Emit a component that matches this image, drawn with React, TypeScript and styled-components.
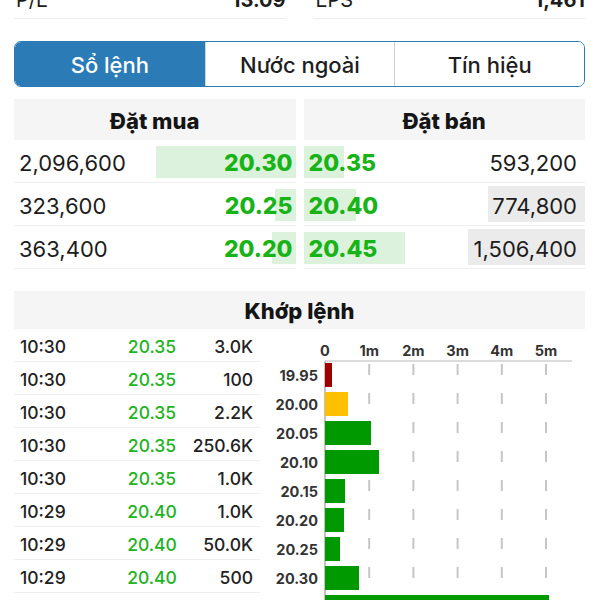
import React from 'react';
import styled, { createGlobalStyle } from 'styled-components';

const GlobalStyle = createGlobalStyle`
  body {
    margin: 0;
    background: #ffffff;
    font-family: Inter, "Noto Sans", "Liberation Sans", sans-serif;
    color: #1c1c1c;
  }
`;

const Page = styled.div`
  padding: 0 15px 0 14px;
  overflow: hidden;
`;

const StatsGrid = styled.div`
  display: grid;
  grid-template-columns: 1fr 1fr;
  column-gap: 28px;
  margin-top: -12px;
`;

const StatCell = styled.div`
  display: flex;
  justify-content: space-between;
  padding: 0 0 6px 2px;
  line-height: 24px;
  font-size: 20px;
  border-bottom: 1px solid #eeeeee;
`;

const StatValue = styled.span`
  font-weight: 700;
`;

const Tabs = styled.div`
  display: grid;
  grid-template-columns: repeat(3, 1fr);
  height: 46px;
  margin-top: 22px;
  border: 1.5px solid #2b7bb6;
  border-radius: 7px;
  overflow: hidden;
  box-sizing: border-box;
`;

const Tab = styled.div<{ $active?: boolean }>`
  display: flex;
  align-items: center;
  justify-content: center;
  padding-top: 2px;
  font-size: 22px;
  font-weight: 500;
  background: ${(p) => (p.$active ? '#2b7bb6' : '#ffffff')};
  color: ${(p) => (p.$active ? '#ffffff' : '#1e1e1e')};
  & + & {
    border-left: 1px solid #d2d2d2;
  }
`;

const OrderBook = styled.div`
  display: grid;
  grid-template-columns: 1fr 1fr;
  column-gap: 8px;
  margin-top: 12px;
`;

const SectionHeader = styled.div<{ $height: number }>`
  height: ${(p) => p.$height}px;
  box-sizing: border-box;
  padding-top: 2px;
  display: flex;
  align-items: center;
  justify-content: center;
  background: #f5f5f5;
  font-size: 22px;
  font-weight: 800;
  color: #151515;
`;

const BookRow = styled.div<{ $side: 'bid' | 'ask' }>`
  position: relative;
  box-sizing: border-box;
  height: 43px;
  display: flex;
  align-items: center;
  justify-content: space-between;
  padding: ${(p) => (p.$side === 'bid' ? '3px 3px 0 5px' : '3px 8px 0 5px')};
  border-bottom: 1px solid #efefef;
`;

const Fill = styled.div<{ $tone: 'green' | 'gray'; $align: 'left' | 'right' }>`
  position: absolute;
  top: ${(p) => (p.$tone === 'green' ? '6px' : '3px')};
  bottom: ${(p) => (p.$tone === 'green' ? '4px' : '3px')};
  ${(p) => (p.$align === 'left' ? 'left: 0;' : 'right: 0;')}
  background: ${(p) => (p.$tone === 'green' ? '#dcf2dc' : '#ebebeb')};
`;

const Volume = styled.span`
  position: relative;
  font-size: 22px;
  color: #1c1c1c;
`;

const Price = styled.span`
  position: relative;
  font-size: 23px;
  font-weight: 800;
  color: #17b317;
`;

const Trades = styled.div`
  margin-top: 22px;
`;

const TradesBody = styled.div`
  display: grid;
  grid-template-columns: 246px 1fr;
`;

const TradeRow = styled.div`
  display: grid;
  grid-template-columns: 94px 76px 1fr;
  align-items: center;
  box-sizing: border-box;
  height: 33px;
  padding: 3px 7px 0 6px;
  border-bottom: 1px solid #efefef;
  font-size: 17.5px;
  font-weight: 500;
  color: #222222;
`;

const TradePrice = styled.span`
  text-align: center;
  color: #22b322;
`;

const TradeVol = styled.span`
  text-align: right;
`;

const Chart = styled.svg`
  display: block;
  font-family: Inter, "Noto Sans", sans-serif;
`;

const bids = [
  { vol: '2,096,600', price: '20.30', fill: 140 },
  { vol: '323,600', price: '20.25', fill: 21 },
  { vol: '363,400', price: '20.20', fill: 24 },
];

const asks = [
  { price: '20.35', vol: '593,200', fill: 40, volFill: 0 },
  { price: '20.40', vol: '774,800', fill: 52, volFill: 97 },
  { price: '20.45', vol: '1,506,400', fill: 101, volFill: 117 },
];

const trades = [
  ['10:30', '20.35', '3.0K'],
  ['10:30', '20.35', '100'],
  ['10:30', '20.35', '2.2K'],
  ['10:30', '20.35', '250.6K'],
  ['10:30', '20.35', '1.0K'],
  ['10:29', '20.40', '1.0K'],
  ['10:29', '20.40', '50.0K'],
  ['10:29', '20.40', '500'],
];

const levels = [
  { p: '19.95', w: 7, c: '#a10000' },
  { p: '20.00', w: 23, c: '#ffc000' },
  { p: '20.05', w: 46, c: '#009a00' },
  { p: '20.10', w: 54, c: '#009a00' },
  { p: '20.15', w: 20, c: '#009a00' },
  { p: '20.20', w: 19, c: '#009a00' },
  { p: '20.25', w: 15, c: '#009a00' },
  { p: '20.30', w: 34, c: '#009a00' },
  { p: '20.35', w: 224, c: '#009a00' },
];

const X0 = 65;
const STEP = 44.2;

function VolumeChart() {
  const ticks = ['0', '1m', '2m', '3m', '4m', '5m'];
  return (
    <Chart width={325} height={290} viewBox="0 0 325 290">
      {ticks.map((t, i) => (
        <text
          key={t}
          x={X0 + i * STEP}
          y={23}
          textAnchor="middle"
          dominantBaseline="middle"
          fontSize={14.5}
          fontWeight={700}
          fill="#333"
        >
          {t}
        </text>
      ))}
      {ticks.slice(1).map((t, i) => (
        <line
          key={t}
          x1={X0 + (i + 1) * STEP}
          x2={X0 + (i + 1) * STEP}
          y1={35}
          y2={290}
          stroke="#c6c6c6"
          strokeWidth={2}
          strokeDasharray="11 18"
        />
      ))}
      <line x1={X0} x2={312} y1={32} y2={32} stroke="#cfcfcf" strokeWidth={1.5} />
      <line x1={X0} x2={X0} y1={32} y2={290} stroke="#b0b0b0" strokeWidth={1.5} />
      {levels.map((l, i) => (
        <g key={l.p}>
          <rect x={X0} y={34 + i * 29} width={l.w} height={24} fill={l.c} />
          <text
            x={58}
            y={48 + i * 29}
            textAnchor="end"
            dominantBaseline="middle"
            fontSize={14.5}
            fontWeight={700}
            fill="#333"
          >
            {l.p}
          </text>
        </g>
      ))}
    </Chart>
  );
}

export default function App() {
  return (
    <Page>
      <GlobalStyle />
      <StatsGrid>
        <StatCell>
          <span>P/E</span>
          <StatValue>13.09</StatValue>
        </StatCell>
        <StatCell>
          <span>EPS</span>
          <StatValue>1,461</StatValue>
        </StatCell>
      </StatsGrid>

      <Tabs>
        <Tab $active>Sổ lệnh</Tab>
        <Tab>Nước ngoài</Tab>
        <Tab>Tín hiệu</Tab>
      </Tabs>

      <OrderBook>
        <div>
          <SectionHeader $height={41}>Đặt mua</SectionHeader>
          {bids.map((b) => (
            <BookRow key={b.price} $side="bid">
              <Fill $tone="green" $align="right" style={{ width: b.fill }} />
              <Volume>{b.vol}</Volume>
              <Price>{b.price}</Price>
            </BookRow>
          ))}
        </div>
        <div>
          <SectionHeader $height={41}>Đặt bán</SectionHeader>
          {asks.map((a) => (
            <BookRow key={a.price} $side="ask">
              <Fill $tone="green" $align="left" style={{ width: a.fill }} />
              {a.volFill > 0 && <Fill $tone="gray" $align="right" style={{ width: a.volFill }} />}
              <Price>{a.price}</Price>
              <Volume>{a.vol}</Volume>
            </BookRow>
          ))}
        </div>
      </OrderBook>

      <Trades>
        <SectionHeader $height={38}>Khớp lệnh</SectionHeader>
        <TradesBody>
          <div>
            {trades.map(([t, p, v], i) => (
              <TradeRow key={i}>
                <span>{t}</span>
                <TradePrice>{p}</TradePrice>
                <TradeVol>{v}</TradeVol>
              </TradeRow>
            ))}
          </div>
          <VolumeChart />
        </TradesBody>
      </Trades>
    </Page>
  );
}
